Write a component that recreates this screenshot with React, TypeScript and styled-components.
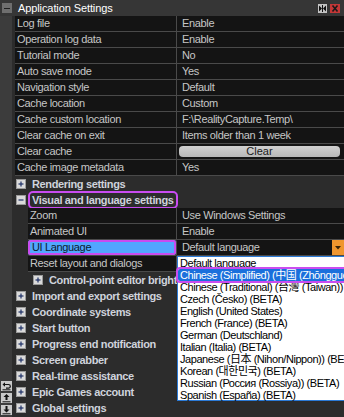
import { createGlobalStyle, styled } from 'styled-components'

type Item =
  | { kind: 'prop'; label: string; value?: string; control?: 'button' | 'combo'; depth: number; selected?: boolean }
  | { kind: 'group'; label: string; open: boolean; depth: number; marked?: boolean }

const items: Item[] = [
  { kind: 'prop', label: 'Log file', value: 'Enable', depth: 0 },
  { kind: 'prop', label: 'Operation log data', value: 'Enable', depth: 0 },
  { kind: 'prop', label: 'Tutorial mode', value: 'No', depth: 0 },
  { kind: 'prop', label: 'Auto save mode', value: 'Yes', depth: 0 },
  { kind: 'prop', label: 'Navigation style', value: 'Default', depth: 0 },
  { kind: 'prop', label: 'Cache location', value: 'Custom', depth: 0 },
  { kind: 'prop', label: 'Cache custom location', value: 'F:\\RealityCapture.Temp\\', depth: 0 },
  { kind: 'prop', label: 'Clear cache on exit', value: 'Items older than 1 week', depth: 0 },
  { kind: 'prop', label: 'Clear cache', control: 'button', value: 'Clear', depth: 0 },
  { kind: 'prop', label: 'Cache image metadata', value: 'Yes', depth: 0 },
  { kind: 'group', label: 'Rendering settings', open: false, depth: 0 },
  { kind: 'group', label: 'Visual and language settings', open: true, depth: 0, marked: true },
  { kind: 'prop', label: 'Zoom', value: 'Use Windows Settings', depth: 1 },
  { kind: 'prop', label: 'Animated UI', value: 'Enable', depth: 1 },
  { kind: 'prop', label: 'UI Language', control: 'combo', value: 'Default language', depth: 1, selected: true },
  { kind: 'prop', label: 'Reset layout and dialogs', value: '', depth: 1 },
  { kind: 'group', label: 'Control-point editor brightness', open: false, depth: 1 },
  { kind: 'group', label: 'Import and export settings', open: false, depth: 0 },
  { kind: 'group', label: 'Coordinate systems', open: false, depth: 0 },
  { kind: 'group', label: 'Start button', open: false, depth: 0 },
  { kind: 'group', label: 'Progress end notification', open: false, depth: 0 },
  { kind: 'group', label: 'Screen grabber', open: false, depth: 0 },
  { kind: 'group', label: 'Real-time assistance', open: false, depth: 0 },
  { kind: 'group', label: 'Epic Games account', open: false, depth: 0 },
  { kind: 'group', label: 'Global settings', open: false, depth: 0 },
]

const languages = [
  'Default language',
  'Chinese (Simplified) (中国 (Zhōngguó)) (BETA)',
  'Chinese (Traditional) (台灣 (Taiwan)) (BETA)',
  'Czech (Česko) (BETA)',
  'English (United States)',
  'French (France) (BETA)',
  'German (Deutschland)',
  'Italian (Italia) (BETA)',
  'Japanese (日本 (Nihon/Nippon)) (BETA)',
  'Korean (대한민국) (BETA)',
  'Russian (Россия (Rossiya)) (BETA)',
  'Spanish (España) (BETA)',
]

function App() {
  return (
    <>
      <GlobalStyle />
      <StPanel>
        <StHeader>
          <StHeaderToggle>
            <svg width="10" height="10" viewBox="0 0 10 10">
              <rect width="10" height="10" fill="#6e6e6e" />
              <path d="M2 5.5h6" stroke="#1e1e1e" strokeWidth="1" />
            </svg>
          </StHeaderToggle>
          <StTitle>Application Settings</StTitle>
          <StTitleButtons>
            <svg width="9" height="9" viewBox="0 0 9 9">
              <rect width="9" height="9" fill="#c4c4c4" />
              <path d="M1 1.5v6l3-3zM8 1.5v6l-3-3z" fill="#111" />
              <path d="M4.5 1v7" stroke="#111" strokeWidth="1" />
            </svg>
            <svg width="10" height="9" viewBox="0 0 10 9">
              <rect width="10" height="9" fill="#c43737" />
              <path d="M2.5 1.5l5 6M7.5 1.5l-5 6" stroke="#1a1a1a" strokeWidth="1.6" />
            </svg>
          </StTitleButtons>
        </StHeader>
        <StBody>
          <StGutter>
            <StGutterIcon>
              <svg width="11" height="10" viewBox="0 0 11 10">
                <rect width="11" height="10" fill="#c9c9c9" />
                <path d="M3 3.5h4.5a1.8 1.8 0 0 1 0 3.6H5" stroke="#111" strokeWidth="1.2" fill="none" />
                <path d="M1.5 3.5l2.5-2.2v4.4z" fill="#111" />
                <path d="M1.5 8.8h8" stroke="#111" strokeWidth="1" />
              </svg>
            </StGutterIcon>
            <StGutterIcon>
              <svg width="11" height="10" viewBox="0 0 11 10">
                <rect width="11" height="10" fill="#c9c9c9" />
                <path d="M5.5 1l3 3h-2v3h-2v-3h-2z" fill="#111" />
                <path d="M1.5 8.8h8" stroke="#111" strokeWidth="1" />
              </svg>
            </StGutterIcon>
            <StGutterIcon>
              <svg width="11" height="10" viewBox="0 0 11 10">
                <rect width="11" height="10" fill="#c9c9c9" />
                <path d="M5.5 7.5l3-3h-2v-3.5h-2v3.5h-2z" fill="#111" />
                <path d="M1.5 8.8h8" stroke="#111" strokeWidth="1" />
              </svg>
            </StGutterIcon>
          </StGutter>
          <StList>
            {items.map((item, index) =>
              item.kind === 'group' ? (
                <StGroupRow key={index} $depth={item.depth}>
                  <Toggle open={item.open} />
                  <StGroupLabel $marked={!!item.marked}>{item.label}</StGroupLabel>
                </StGroupRow>
              ) : (
                <StPropRow key={index} $depth={item.depth}>
                  <StLabelCell $selected={!!item.selected}>{item.label}</StLabelCell>
                  <StValueCell>
                    {item.control === 'button' ? (
                      <StButton>{item.value}</StButton>
                    ) : item.control === 'combo' ? (
                      <StCombo>
                        <span>{item.value}</span>
                        <StComboArrow>
                          <svg width="6" height="4" viewBox="0 0 6 4">
                            <path d="M0 0h6l-3 3.5z" fill="#3a2408" />
                          </svg>
                        </StComboArrow>
                      </StCombo>
                    ) : (
                      item.value
                    )}
                  </StValueCell>
                </StPropRow>
              )
            )}
          </StList>
        </StBody>
        <StDropdown>
          {languages.map((lang, index) => (
            <StOption key={lang} $active={index === 1}>
              {lang}
            </StOption>
          ))}
        </StDropdown>
      </StPanel>
    </>
  )
}

export default App

const Toggle = ({ open }: { open: boolean }) => (
  <StToggle>
    <svg width="10" height="10" viewBox="0 0 10 10">
      <rect x="0.5" y="0.5" width="9" height="9" fill="#dadada" stroke="#9a9a9a" />
      <path d="M2.5 5h5" stroke="#1d2f66" strokeWidth="1.2" />
      {open ? null : <path d="M5 2.5v5" stroke="#1d2f66" strokeWidth="1.2" />}
    </svg>
  </StToggle>
)

// #region styles

const GlobalStyle = createGlobalStyle`
  body {
    margin: 0;
    background: #3a3a3a;
    font-family: 'Liberation Sans', Arial, 'Noto Sans CJK SC', sans-serif;
  }
`

const StPanel = styled.div`
  position: relative;
  width: 344px;
  height: 417px;
  overflow: hidden;
  background: #3a3a3a;
  display: flex;
  flex-direction: column;
`

const StHeader = styled.div`
  height: 16px;
  display: flex;
  align-items: center;
  background: #363636;
`

const StHeaderToggle = styled.div`
  width: 18px;
  padding-left: 2px;
  box-sizing: border-box;
  display: flex;
  & > svg {
    display: block;
  }
`

const StTitle = styled.div`
  flex: 1;
  color: #ffffff;
  font-size: 11px;
  letter-spacing: -0.1px;
`

const StTitleButtons = styled.div`
  display: flex;
  gap: 3px;
  padding-right: 4px;
  & > svg {
    display: block;
  }
`

const StBody = styled.div`
  flex: 1;
  display: flex;
`

const StGutter = styled.div`
  width: 12px;
  display: flex;
  flex-direction: column;
  justify-content: flex-end;
  align-items: flex-start;
  gap: 2px;
  padding: 0 0 2px 1px;
  box-sizing: border-box;
  background: #3c3c3c;
`

const StGutterIcon = styled.div`
  & > svg {
    display: block;
  }
`

const StList = styled.div`
  flex: 1;
  display: flex;
  flex-direction: column;
  background: #2c2c2c;
  font-size: 11px;
  letter-spacing: -0.35px;
`

const StPropRow = styled.div<{ $depth: number }>`
  height: 16px;
  display: grid;
  grid-template-columns: ${(p) => (p.$depth ? 149 : 162)}px 1fr;
  margin-left: ${(p) => (p.$depth ? 16 : 3)}px;
`

const StLabelCell = styled.div<{ $selected: boolean }>`
  background: ${(p) => (p.$selected ? '#52a6ff' : '#141414')};
  color: ${(p) => (p.$selected ? '#0c1a2c' : '#c6c6c6')};
  border-bottom: 1px solid #4a4a4a;
  border-right: 1px solid #4a4a4a;
  padding-left: ${(p) => (p.$selected ? 4 : 2)}px;
  line-height: 15px;
  white-space: nowrap;
  overflow: hidden;
  border-radius: ${(p) => (p.$selected ? '3px' : '0')};
  box-shadow: ${(p) => (p.$selected ? 'inset 0 0 0 2px #c94cf0' : 'none')};
`

const StValueCell = styled.div`
  background: #141414;
  color: #c6c6c6;
  border-bottom: 1px solid #4a4a4a;
  padding-left: 5px;
  line-height: 15px;
  white-space: nowrap;
  overflow: hidden;
  display: flex;
  align-items: center;
`

const StButton = styled.div`
  width: 161px;
  height: 11px;
  margin-left: -3px;
  border-radius: 4px;
  background: linear-gradient(#d0d0d0, #b8b8b8);
  color: #1a1a1a;
  text-align: center;
  line-height: 11px;
  letter-spacing: 0;
`

const StCombo = styled.div`
  flex: 1;
  display: flex;
  align-items: center;
  justify-content: space-between;
  height: 15px;
`

const StComboArrow = styled.div`
  width: 12px;
  height: 15px;
  background: #f0962e;
  display: flex;
  align-items: center;
  justify-content: center;
  & > svg {
    display: block;
  }
`

const StGroupRow = styled.div<{ $depth: number }>`
  height: 16px;
  display: flex;
  align-items: center;
  padding-left: ${(p) => (p.$depth ? 21 : 4)}px;
  color: #cfd3dc;
  font-weight: 700;
  white-space: nowrap;
`

const StToggle = styled.div`
  display: flex;
  & > svg {
    display: block;
  }
`

const StGroupLabel = styled.div<{ $marked: boolean }>`
  margin-left: ${(p) => (p.$marked ? 4 : 6)}px;
  padding-left: ${(p) => (p.$marked ? 2 : 0)}px;
  width: ${(p) => (p.$marked ? '144px' : 'auto')};
  height: 14px;
  line-height: 14px;
  border-radius: 3px;
  outline: ${(p) => (p.$marked ? '2px solid #c94cf0' : 'none')};
`

const StDropdown = styled.div`
  position: absolute;
  left: 177px;
  top: 256px;
  width: 190px;
  height: 145px;
  box-sizing: border-box;
  background: #ffffff;
  border: 1px solid #2b7ad6;
  font-size: 11px;
  letter-spacing: -0.45px;
  color: #000000;
`

const StOption = styled.div<{ $active: boolean }>`
  height: 12px;
  line-height: 12px;
  padding-left: 2px;
  white-space: nowrap;
  background: ${(p) => (p.$active ? '#1a70dc' : 'transparent')};
  color: ${(p) => (p.$active ? '#ffffff' : '#000000')};
  border-radius: 2px;
  outline: ${(p) => (p.$active ? '2px solid #c94cf0' : 'none')};
`

// #endregion styles
